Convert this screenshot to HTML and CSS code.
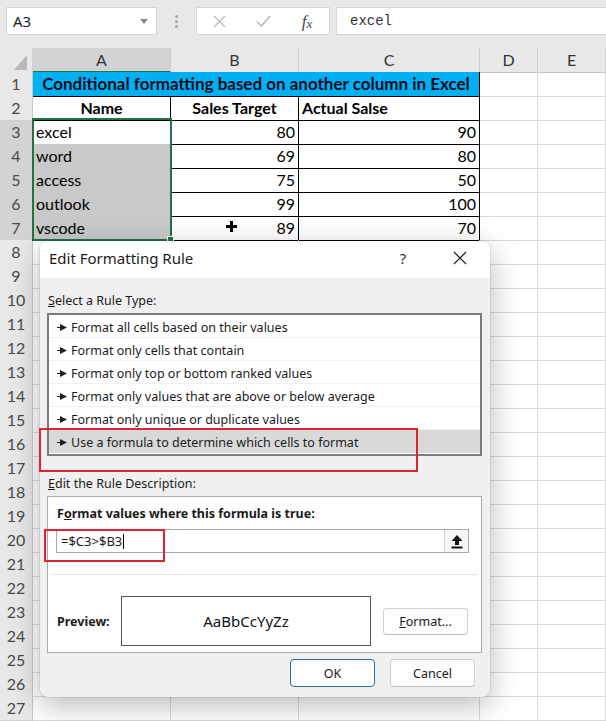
FILE: index.html
```html
<!DOCTYPE html>
<html>
<head>
<meta charset="utf-8">
<title>Edit Formatting Rule</title>
<link rel="stylesheet" href="styles.css">
</head>
<body>
<div class="app">
  <header class="toolbar">
    <div class="namebox"><span>A3</span><svg class="dd" width="8" height="5" viewBox="0 0 8 5"><path d="M0 0h8L4 5z" fill="#8a8a8a"/></svg></div>
    <div class="grip"><i></i><i></i><i></i></div>
    <div class="fxbtns">
      <span class="fxb"><svg width="13" height="13" viewBox="0 0 13 13"><path d="M1 1l11 11M12 1L1 12" stroke="#b8b8b8" stroke-width="1.3" fill="none"/></svg></span>
      <span class="fxb"><svg width="15" height="12" viewBox="0 0 15 12"><path d="M1 6.5l4.5 4.5L14 1" stroke="#b8b8b8" stroke-width="1.5" fill="none"/></svg></span>
      <span class="fxb fx">f<span class="fxx">x</span></span>
    </div>
    <div class="formula">excel</div>
  </header>

  <div class="colhdr">
    <div class="corner"><svg width="13" height="15" viewBox="0 0 13 15"><path d="M13 0V15H0z" fill="#b9b9b9"/></svg></div>
    <div class="ch on">A</div>
    <div class="ch">B</div>
    <div class="ch">C</div>
    <div class="ch">D</div>
    <div class="ch">E</div>
  </div>

  <div class="sheet">
    <div class="row"><div class="rh">1</div><div class="c t title">Conditional formatting based on another column in Excel</div><div class="c"></div><div class="c"></div></div>
    <div class="row"><div class="rh">2</div><div class="c t bold center">Name</div><div class="c t bold center">Sales Target</div><div class="c t bold">Actual Salse</div><div class="c"></div><div class="c"></div></div>
    <div class="row"><div class="rh on">3</div><div class="c t">excel</div><div class="c t num">80</div><div class="c t num">90</div><div class="c"></div><div class="c"></div></div>
    <div class="row"><div class="rh on">4</div><div class="c t hl">word</div><div class="c t num">69</div><div class="c t num">80</div><div class="c"></div><div class="c"></div></div>
    <div class="row"><div class="rh on">5</div><div class="c t hl">access</div><div class="c t num">75</div><div class="c t num">50</div><div class="c"></div><div class="c"></div></div>
    <div class="row"><div class="rh on">6</div><div class="c t hl">outlook</div><div class="c t num">99</div><div class="c t num">100</div><div class="c"></div><div class="c"></div></div>
    <div class="row"><div class="rh on">7</div><div class="c t hl">vscode</div><div class="c t num">89</div><div class="c t num">70</div><div class="c"></div><div class="c"></div></div>
    <div class="row"><div class="rh">8</div><div class="c"></div><div class="c"></div><div class="c"></div><div class="c"></div><div class="c"></div></div>
    <div class="row"><div class="rh">9</div><div class="c"></div><div class="c"></div><div class="c"></div><div class="c"></div><div class="c"></div></div>
    <div class="row"><div class="rh">10</div><div class="c"></div><div class="c"></div><div class="c"></div><div class="c"></div><div class="c"></div></div>
    <div class="row"><div class="rh">11</div><div class="c"></div><div class="c"></div><div class="c"></div><div class="c"></div><div class="c"></div></div>
    <div class="row"><div class="rh">12</div><div class="c"></div><div class="c"></div><div class="c"></div><div class="c"></div><div class="c"></div></div>
    <div class="row"><div class="rh">13</div><div class="c"></div><div class="c"></div><div class="c"></div><div class="c"></div><div class="c"></div></div>
    <div class="row"><div class="rh">14</div><div class="c"></div><div class="c"></div><div class="c"></div><div class="c"></div><div class="c"></div></div>
    <div class="row"><div class="rh">15</div><div class="c"></div><div class="c"></div><div class="c"></div><div class="c"></div><div class="c"></div></div>
    <div class="row"><div class="rh">16</div><div class="c"></div><div class="c"></div><div class="c"></div><div class="c"></div><div class="c"></div></div>
    <div class="row"><div class="rh">17</div><div class="c"></div><div class="c"></div><div class="c"></div><div class="c"></div><div class="c"></div></div>
    <div class="row"><div class="rh">18</div><div class="c"></div><div class="c"></div><div class="c"></div><div class="c"></div><div class="c"></div></div>
    <div class="row"><div class="rh">19</div><div class="c"></div><div class="c"></div><div class="c"></div><div class="c"></div><div class="c"></div></div>
    <div class="row"><div class="rh">20</div><div class="c"></div><div class="c"></div><div class="c"></div><div class="c"></div><div class="c"></div></div>
    <div class="row"><div class="rh">21</div><div class="c"></div><div class="c"></div><div class="c"></div><div class="c"></div><div class="c"></div></div>
    <div class="row"><div class="rh">22</div><div class="c"></div><div class="c"></div><div class="c"></div><div class="c"></div><div class="c"></div></div>
    <div class="row"><div class="rh">23</div><div class="c"></div><div class="c"></div><div class="c"></div><div class="c"></div><div class="c"></div></div>
    <div class="row"><div class="rh">24</div><div class="c"></div><div class="c"></div><div class="c"></div><div class="c"></div><div class="c"></div></div>
    <div class="row"><div class="rh">25</div><div class="c"></div><div class="c"></div><div class="c"></div><div class="c"></div><div class="c"></div></div>
    <div class="row"><div class="rh">26</div><div class="c"></div><div class="c"></div><div class="c"></div><div class="c"></div><div class="c"></div></div>
    <div class="row"><div class="rh">27</div><div class="c"></div><div class="c"></div><div class="c"></div><div class="c"></div><div class="c"></div></div>
  </div>

  <div class="selection"><span class="handle"></span></div>
  <svg class="plus" width="11" height="11" viewBox="0 0 11 11"><path d="M4 0h3v4h4v3H7v4H4V7H0V4h4z" fill="#000"/></svg>

  <div class="dialog">
    <div class="dlg-title">
      <span class="dlg-name">Edit Formatting Rule</span>
      <span class="help">?</span>
      <span class="close"><svg width="14" height="14" viewBox="0 0 14 14"><path d="M1 1l12 12M13 1L1 13" stroke="#1f1f1f" stroke-width="1.2" fill="none"/></svg></span>
    </div>
    <div class="dlg-body">
      <div class="lbl lbl-first"><u>S</u>elect a Rule Type:</div>
      <div class="rules">
        <div class="rule"><svg class="arr" width="10" height="7" viewBox="0 0 10 7"><path d="M0 3h4V4H0z M3 0l7 3.5L3 7z" fill="#1f1f1f"/></svg>Format all cells based on their values</div>
        <div class="rule"><svg class="arr" width="10" height="7" viewBox="0 0 10 7"><path d="M0 3h4V4H0z M3 0l7 3.5L3 7z" fill="#1f1f1f"/></svg>Format only cells that contain</div>
        <div class="rule"><svg class="arr" width="10" height="7" viewBox="0 0 10 7"><path d="M0 3h4V4H0z M3 0l7 3.5L3 7z" fill="#1f1f1f"/></svg>Format only top or bottom ranked values</div>
        <div class="rule"><svg class="arr" width="10" height="7" viewBox="0 0 10 7"><path d="M0 3h4V4H0z M3 0l7 3.5L3 7z" fill="#1f1f1f"/></svg>Format only values that are above or below average</div>
        <div class="rule"><svg class="arr" width="10" height="7" viewBox="0 0 10 7"><path d="M0 3h4V4H0z M3 0l7 3.5L3 7z" fill="#1f1f1f"/></svg>Format only unique or duplicate values</div>
        <div class="rule active"><svg class="arr" width="10" height="7" viewBox="0 0 10 7"><path d="M0 3h4V4H0z M3 0l7 3.5L3 7z" fill="#1f1f1f"/></svg>Use a formula to determine which cells to format</div>
      </div>
      <div class="lbl lbl-second"><u>E</u>dit the Rule Description:</div>
      <div class="group">
        <div class="ghead">F<u>o</u>rmat values where this formula is true:</div>
        <div class="finput">
          <span class="ftext">=$C3&gt;$B3</span><span class="caret"></span>
          <span class="upbtn"><svg width="12" height="15" viewBox="0 0 12 15"><path d="M6 1l5.5 6H8v4H4V7H0.5z" fill="#111"/><rect x="0.5" y="12.5" width="11" height="2" fill="#111"/></svg></span>
        </div>
        <div class="gsep"></div>
        <div class="prow">
          <span class="plabel">Preview:</span>
          <div class="pbox">AaBbCcYyZz</div>
          <button class="btn fmt"><u>F</u>ormat...</button>
        </div>
      </div>
      <div class="footer">
        <button class="btn ok">OK</button>
        <button class="btn">Cancel</button>
      </div>
    </div>
  </div>

  <div class="mark mark-list"></div>
  <div class="mark mark-formula"></div>
</div>
</body>
</html>
```

FILE: styles.css
```css
html, body {
  margin: 0;
  padding: 0;
  overflow: hidden;
  background: #ffffff;
}

.app {
  position: relative;
  width: 606px;
  height: 721px;
  overflow: hidden;
  font-family: "Lato", "Liberation Sans", sans-serif;
}

/* ---------- formula toolbar ---------- */
.toolbar {
  height: 48px;
  box-sizing: border-box;
  background: #e8e8e8;
  display: flex;
  align-items: flex-start;
  padding-top: 7px;
  padding-left: 6px;
}

.namebox {
  width: 151px;
  height: 28px;
  box-sizing: border-box;
  background: #fff;
  border: 1px solid #d6d6d6;
  display: flex;
  align-items: center;
  padding: 0 8px 0 6px;
  font-family: "Noto Sans", sans-serif;
  font-size: 15px;
  color: #222;
}

.namebox .dd {
  margin-left: auto;
}

.grip {
  width: 39px;
  height: 28px;
  display: flex;
  flex-direction: column;
  align-items: center;
  justify-content: center;
  gap: 2px;
}

.grip i {
  display: block;
  width: 3px;
  height: 3px;
  border-radius: 50%;
  background: #a6a6a6;
}

.fxbtns {
  width: 134px;
  height: 28px;
  box-sizing: border-box;
  background: #fff;
  border: 1px solid #d6d6d6;
  display: flex;
  align-items: center;
}

.fxb {
  width: 44px;
  display: flex;
  justify-content: center;
  align-items: center;
}

.fx {
  font-family: "Liberation Serif", serif;
  font-style: italic;
  font-size: 17px;
  color: #444;
  line-height: 1;
}

.fxx {
  font-size: 13px;
  position: relative;
  top: 2px;
}

.formula {
  margin-left: 6px;
  flex: 1;
  height: 28px;
  box-sizing: border-box;
  background: #fff;
  border: 1px solid #d6d6d6;
  border-right: none;
  padding-left: 13px;
  font-family: "Liberation Mono", monospace;
  font-size: 14px;
  line-height: 26px;
  color: #333;
}

/* ---------- grid ---------- */
.colhdr,
.row {
  display: grid;
  grid-template-columns: 33px 138px 128px 181px 58px 1fr;
  height: 24px;
}

.colhdr {
  background: #e8e8e8;
}

.corner {
  box-sizing: border-box;
  border-right: 1px solid #cfcfcf;
  border-bottom: 1px solid #c4c4c4;
  display: flex;
  align-items: flex-end;
  justify-content: flex-end;
  padding: 0 5px 2px 0;
}

.ch {
  box-sizing: border-box;
  border-right: 1px solid #cfcfcf;
  border-bottom: 1px solid #c4c4c4;
  text-align: center;
  font-size: 16px;
  line-height: 23px;
  color: #333;
}

.ch.on {
  background: #d3d3d3;
  border-bottom: 2px solid #1f7244;
}

.rh {
  box-sizing: border-box;
  background: #e8e8e8;
  border-right: 1px solid #c8c8c8;
  border-bottom: 1px solid #d2d2d2;
  text-align: center;
  font-size: 16px;
  line-height: 24px;
  color: #4a4a4a;
}

.rh.on {
  background: #d3d3d3;
}

.c {
  box-sizing: border-box;
  border-right: 1px solid #dadada;
  border-bottom: 1px solid #dadada;
  padding: 0 3px;
  font-size: 16px;
  line-height: 24px;
  color: #000;
  white-space: nowrap;
  overflow: hidden;
}

.c.t {
  border-right-color: #000;
  border-bottom-color: #000;
}

.c.title {
  grid-column: span 3;
  background: #00b0f0;
  font-weight: 700;
  font-size: 17px;
  line-height: 23px;
  text-align: center;
  color: #0c0c1e;
}

.bold { font-weight: 700; }
.center { text-align: center; }
.num { text-align: right; }
.hl { background: #c9c9c9; }

.selection {
  position: absolute;
  left: 32px;
  top: 118px;
  width: 140px;
  height: 123px;
  box-sizing: border-box;
  border: 2px solid #217346;
}

.handle {
  position: absolute;
  right: -4px;
  bottom: -4px;
  width: 5px;
  height: 5px;
  background: #217346;
  border: 1px solid #fff;
}

.plus {
  position: absolute;
  left: 226px;
  top: 221px;
}

/* ---------- dialog ---------- */
.dialog {
  position: absolute;
  left: 40px;
  top: 241px;
  width: 450px;
  height: 456px;
  box-sizing: border-box;
  background: #f0f0f0;
  border-radius: 8px;
  overflow: hidden;
  box-shadow: 0 8px 30px rgba(0, 0, 0, 0.28), 0 0 0 1px rgba(0, 0, 0, 0.07);
  display: flex;
  flex-direction: column;
  font-family: "Noto Sans", sans-serif;
  font-size: 12.5px;
  color: #1b1b1b;
}

.dlg-title {
  height: 37px;
  flex: none;
  box-sizing: border-box;
  background: #fff;
  display: flex;
  align-items: center;
  padding-left: 9px;
  padding-right: 20px;
  padding-bottom: 3px;
  font-size: 15px;
}

.help {
  margin-left: auto;
  width: 20px;
  text-align: center;
  font-size: 15px;
  color: #333;
}

.close {
  margin-left: 37px;
  width: 20px;
  display: flex;
  justify-content: center;
}

.dlg-body {
  flex: 1;
  display: flex;
  flex-direction: column;
  padding: 0 8px 0 7px;
}

.lbl {
  line-height: 16px;
  padding-left: 1px;
}

.lbl-first { margin-top: 15px; }
.lbl-second { margin-top: 20px; }

.rules {
  margin-top: 4px;
  height: 143px;
  box-sizing: border-box;
  border: 2px solid #7a7a7a;
  background: #fff;
  padding-bottom: 1px;
}

.rule {
  height: 23px;
  box-sizing: border-box;
  border-bottom: 1px solid #f0f0f0;
  display: flex;
  align-items: center;
  padding-left: 8px;
  padding-top: 2px;
  gap: 4px;
  white-space: nowrap;
}

.rule.active {
  background: #d9d9d9;
  border-bottom: none;
}

.group {
  margin-top: 4px;
  height: 157px;
  box-sizing: border-box;
  border: 1px solid #ababab;
  background: #fff;
  padding: 9px 12px 0 9px;
}

.ghead {
  font-weight: 700;
  line-height: 16px;
}

.finput {
  margin-top: 7px;
  margin-left: -1px;
  height: 24px;
  box-sizing: border-box;
  border: 1px solid #a9a9a9;
  display: flex;
  align-items: center;
  padding-left: 4px;
  font-size: 13px;
}

.caret {
  width: 1px;
  height: 15px;
  background: #000;
  margin-left: 1px;
}

.upbtn {
  margin-left: auto;
  width: 24px;
  height: 22px;
  box-sizing: border-box;
  background: #f6f6f6;
  border-left: 1px solid #cfcfcf;
  display: flex;
  align-items: center;
  justify-content: center;
}

.gsep {
  margin: 21px -9px 0 -6px;
  height: 1px;
  background: #e3e3e3;
}

.prow {
  margin-top: 21px;
  display: flex;
  align-items: center;
}

.plabel {
  width: 64px;
  font-weight: 700;
}

.pbox {
  width: 250px;
  height: 50px;
  box-sizing: border-box;
  border: 1px solid #555;
  display: flex;
  align-items: center;
  justify-content: center;
  font-size: 15px;
  color: #111;
}

.btn {
  font-family: "Noto Sans", sans-serif;
  font-size: 12.5px;
  color: #1b1b1b;
  background: #fdfdfd;
  border: 1px solid #d0d0d0;
  border-bottom-color: #bdbdbd;
  border-radius: 4px;
  width: 85px;
  height: 28px;
  padding: 0;
}

.btn.fmt {
  margin-left: 12px;
  height: 27px;
}

.btn.ok {
  border-color: #2d6aa6;
}

.footer {
  margin-top: 6px;
  display: flex;
  justify-content: flex-end;
  gap: 15px;
  padding-right: 7px;
}

/* ---------- red annotation boxes ---------- */
.mark {
  position: absolute;
  box-sizing: border-box;
  border: 2px solid #dc2432;
}

.mark-list {
  left: 39px;
  top: 428px;
  width: 379px;
  height: 44px;
}

.mark-formula {
  left: 44px;
  top: 529px;
  width: 121px;
  height: 33px;
}
```
